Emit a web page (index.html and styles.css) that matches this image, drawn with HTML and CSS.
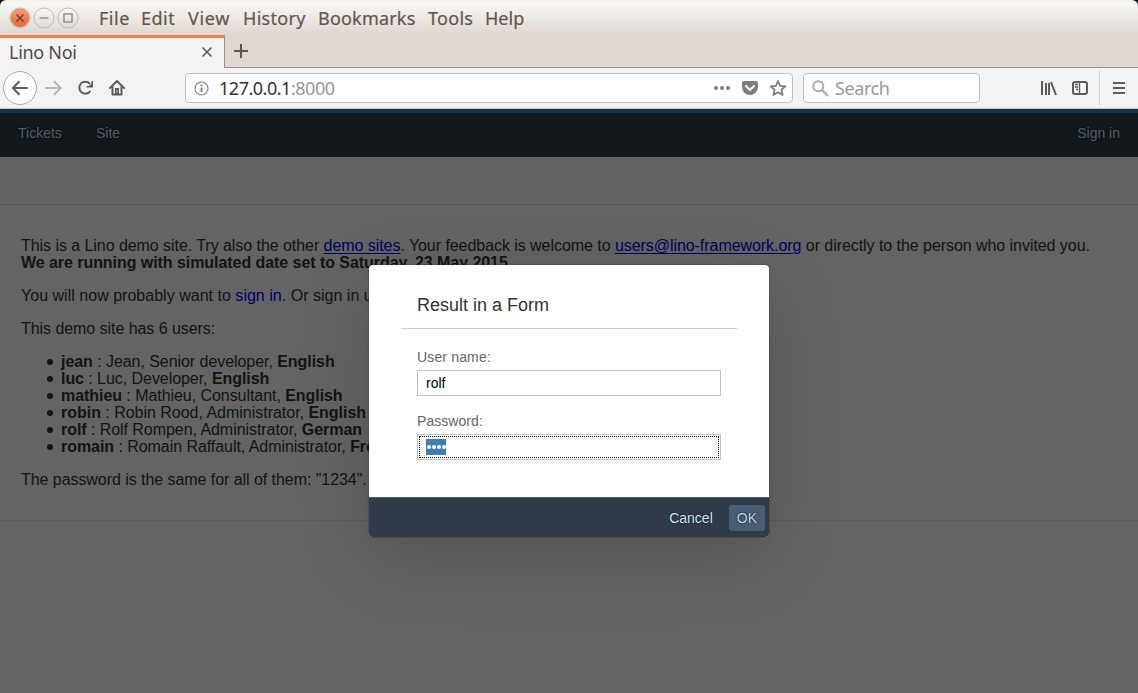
FILE: index.html
```html
<!DOCTYPE html>
<html lang="en">
<head>
<meta charset="utf-8">
<title>Lino Noi</title>
<link rel="stylesheet" href="styles.css">
</head>
<body>
<div class="window">
  <header class="titlebar">
    <svg class="controls" width="72" height="24" viewBox="0 0 72 24">
      <defs>
        <linearGradient id="orange" x1="0" y1="0" x2="0" y2="1"><stop offset="0" stop-color="#f79b78"/><stop offset="1" stop-color="#e9652f"/></linearGradient>
        <linearGradient id="grey" x1="0" y1="0" x2="0" y2="1"><stop offset="0" stop-color="#faf9f8"/><stop offset="1" stop-color="#dedad6"/></linearGradient>
      </defs>
      <g stroke="#c1b9b2">
        <circle cx="12" cy="12" r="10.2" fill="#dfd5cd" stroke="#d3cac3"/>
        <circle cx="12" cy="12" r="9" fill="url(#orange)" stroke="#df8a68"/>
        <circle cx="36" cy="12" r="10" fill="url(#grey)"/>
        <circle cx="60" cy="12" r="10" fill="url(#grey)"/>
      </g>
      <g fill="none" stroke="#6d4435" stroke-width="1.5"><path d="M8.5 8.5l7 7M15.5 8.5l-7 7"/></g>
      <g fill="none" stroke="#999189" stroke-width="1.5"><path d="M31.500 12h9"/><path d="M56 8h8v8h-8z"/></g>
    </svg>
    <nav class="menus"><span class="m-file">File</span><span class="m-edit">Edit</span><span class="m-view">View</span><span class="m-history">History</span><span class="m-book">Bookmarks</span><span class="m-tools">Tools</span><span>Help</span></nav>
  </header>
  <div class="tabs">
    <div class="tab"><span class="tab-title">Lino Noi</span>
      <svg width="12" height="12" viewBox="0 0 12 12" fill="none" stroke="#5b5b5a" stroke-width="1.6"><path d="M1.500 1.500l9 9M10.500 1.500l-9 9"/></svg>
    </div>
    <div class="tab-rest"><svg width="14" height="14" viewBox="0 0 14 14" stroke="#5a5653" stroke-width="2"><path d="M7 0v14M0 7h14"/></svg></div>
  </div>
  <div class="toolbar">
    <svg class="navicons" width="130" height="36" viewBox="0 0 130 36" fill="none" stroke="#5c5c5b" stroke-width="2" stroke-linecap="round" stroke-linejoin="round">
      <circle cx="17" cy="18" r="16.5" fill="#fdfdfd" stroke="#a9a7a5" stroke-width="1"/>
      <path d="M10 18h14M16 11.7L9.8 18l6.2 6.3"/>
      <path stroke="#b6b5b4" d="M43 18h14M51.5 11.7l6.2 6.3-6.2 6.3"/>
      <path stroke-linecap="butt" d="M87 13.9A6 6 0 1 0 87.300 21"/>
      <path fill="#5c5c5b" stroke="none" d="M90 11v6.500h-6.500v-1.500h2.500l2.500-2.500V11z"/>
      <path d="M107 18l7-7 7 7M109.500 17v7.500h9V17"/>
      <path fill="#5c5c5b" stroke="none" d="M112 18h4v6h-4z"/><path stroke="#f4f3f2" stroke-width="1" d="M114 21v1"/>
    </svg>
    <div class="field url">
      <svg width="15" height="15" viewBox="0 0 15 15" fill="none" stroke="#7b7b7b"><circle cx="7.5" cy="7.5" r="6.5" stroke-width="1.1"/><path stroke-width="1.8" d="M7.5 6.5v4.5M7.5 3.6v1.7"/></svg>
      <span class="address"><b>127.0.0.1</b>:8000</span>
      <svg width="74" height="18" viewBox="0 0 74 18" fill="#7e7e7e">
        <circle cx="3" cy="9" r="2"/><circle cx="9" cy="9" r="2"/><circle cx="15" cy="9" r="2"/>
        <path d="M31 2h12q2 0 2 2v4a8 8 0 0 1-16 0V4q0-2 2-2z"/>
        <path fill="none" stroke="#fff" stroke-width="2" stroke-linecap="round" stroke-linejoin="round" d="M33 7l4 4 4-4"/>
        <path fill="none" stroke="#7e7e7e" stroke-width="1.8" stroke-linejoin="round" d="M65 2l2.1 4.800 5.300.5-4 3.500 1.200 5.200-4.600-2.800-4.600 2.800 1.200-5.200-4-3.500 5.300-.5z"/>
      </svg>
    </div>
    <div class="field search">
      <svg width="17" height="17" viewBox="0 0 17 17" fill="none" stroke="#aaa" stroke-width="2"><circle cx="6.3" cy="6.3" r="5"/><path d="M10 10l6 6"/></svg>
      <span>Search</span>
    </div>
    <svg class="right-icons" width="98" height="34" viewBox="0 0 98 34" fill="none" stroke="#5c5c5b" stroke-width="2">
      <path d="M2 10v14M6 12v12M9 12v12"/><path d="M11 11l5 13"/>
      <rect x="33" y="11" width="14" height="12" rx="2"/>
      <path stroke-width="1.3" d="M39.5 11v12M35 13.5h3M35 16h3M36 18.5h2"/>
      <path stroke="#d5d3d1" stroke-width="1" d="M59.500 0v34"/>
      <path d="M73 12h12M73 17h12M73 22h12"/>
    </svg>
  </div>
  <main class="page">
    <nav class="sitebar"><span class="tickets">Tickets</span><span>Site</span><span class="signin">Sign in</span></nav>
    <div class="subbar"></div>
    <section class="content">
      <p>This is a Lino demo site. Try also the other <a class="under">demo sites</a>. Your feedback is welcome to <a class="under">users@lino-framework.org</a> or directly to the person who invited you.<br><b>We are running with simulated date set to Saturday, 23 May 2015.</b></p>
      <p class="wide">You will now probably want to <a>sign in</a>. Or sign in u</p>
      <p>This demo site has 6 users:</p>
      <ul>
        <li><b>jean</b> : Jean, Senior developer, <b>English</b></li>
        <li><b>luc</b> : Luc, Developer, <b>English</b></li>
        <li><b>mathieu</b> : Mathieu, Consultant, <b>English</b></li>
        <li class="robin"><b>robin</b> : Robin Rood, Administrator, <b>English</b></li>
        <li><b>rolf</b> : Rolf Rompen, Administrator, <b>German</b></li>
        <li><b>romain</b> : Romain Raffault, Administrator, <b>Fre</b></li>
      </ul>
      <p>The password is the same for all of them: "1234".</p>
    </section>
    <div class="overlay">
      <div class="dialog">
        <div class="form">
          <h1>Result in a Form</h1>
          <label class="first">User name:</label>
          <div class="input">rolf</div>
          <label class="second">Password:</label>
          <div class="input focused"><span class="selected"><i></i><i></i><i></i><i></i></span></div>
        </div>
        <footer><span class="cancel">Cancel</span><span class="ok">OK</span></footer>
      </div>
    </div>
  </main>
</div>
</body>
</html>
```
FILE: styles.css
```css
* { box-sizing: border-box; }
body { margin: 0; background: #10161b; font-family: "Liberation Sans", Arial, sans-serif; }
svg { display: block; flex: none; }
.window { width: 1138px; height: 693px; display: flex; flex-direction: column; overflow: hidden; border-radius: 6px 6px 0 0; }
.titlebar { flex: none; height: 35px; display: flex; align-items: center; padding-left: 8px; background: linear-gradient(#f0ede9 0, #f8f7f5 3px, #dfd7d0 35px); font-family: "Noto Sans", sans-serif; color: #5f574f; }
.menus { display: grid; grid-template-columns: 42px 47px 55px 75px 110px 57px 60px; margin-left: 19px; font-size: 18px; line-height: 24px; -webkit-text-stroke: .2px #5f574f; white-space: nowrap; }
.m-file, .m-edit { letter-spacing: .5px; }
.m-view { letter-spacing: .7px; }
.m-history { letter-spacing: .3px; }
.m-book { letter-spacing: .2px; }
.m-tools { letter-spacing: .3px; }
.tabs { flex: none; height: 33px; display: flex; font-family: "Noto Sans", sans-serif; }
.tab { width: 225px; display: flex; align-items: center; justify-content: space-between; padding: 0 11px 2px 9px; border-top: 3px solid #f08157; border-right: 1px solid #999089; background: #f4f3f2; color: #4c4c4c; font-size: 18px; }
.tab-title { letter-spacing: -.3px; }
.tab-rest { flex: 1; padding: 9px; background: #dfd7d1; border-bottom: 1px solid #999089; }
.toolbar { flex: none; height: 41px; display: flex; align-items: center; background: #f4f3f2; border-bottom: 1px solid #c9c7c4; padding-left: 3px; font-family: "Noto Sans", sans-serif; font-size: 18px; }
.field { height: 30px; display: flex; align-items: center; background: #fff; border: 1px solid #c3c1be; border-radius: 4px; color: #999; }
.url { width: 608px; margin-left: 52px; padding: 0 5px 0 8px; }
.address { flex: 1; margin-left: 10px; letter-spacing: -.48px; }
.address b { font-weight: 400; color: #333; }
.search { width: 177px; margin-left: 10px; padding-left: 8px; gap: 6px; letter-spacing: -.4px; }
.right-icons { margin-left: 60px; }
.page { flex: 1; position: relative; background: #fafafa; font-size: 16px; line-height: 17px; color: #333; }
.sitebar { height: 48px; display: flex; padding: 12px 18px 0; background: #2f3c48; border-top: 4px solid #427cac; color: #d1e8ff; font-size: 14px; line-height: 16px; text-shadow: 0 0 2px #000; }
.tickets { width: 78px; }
.signin { margin-left: auto; }
.subbar { height: 48px; background: #eff4f9; border-bottom: 1px solid #cfd8e2; }
.content { padding: 32px 21px; height: 316px; border-bottom: 1px solid #e5e5e5; white-space: nowrap; letter-spacing: -.055px; }
.content p { margin: 0 0 16px; }
.content .wide { letter-spacing: .02px; }
.content ul { margin: 0 0 16px; padding-left: 40px; list-style: none; }
.content li::before { content: ""; display: inline-block; width: 6px; height: 6px; margin: 0 8px 2px -14px; border-radius: 50%; background: #333; }
.robin { letter-spacing: -.02px; }
.content a { color: #00e; }
.under { text-decoration: underline; text-underline-offset: 2px; }
.overlay { position: absolute; inset: 0; display: flex; justify-content: center; align-items: flex-start; padding-top: 156px; background: rgba(0,0,0,.6); overflow: hidden; }
.dialog { width: 400px; height: 272px; display: flex; flex-direction: column; border-radius: 4px; overflow: hidden; background: #fff; box-shadow: 0 0 2px rgba(0,0,0,.5), 0 20px 80px rgba(0,0,0,.16); font-size: 14px; }
.form { flex: 1; padding: 16px 32px 0; }
h1 { margin: 0 0 20px; height: 48px; padding-left: 16px; border-bottom: 1px solid #ccc; font-size: 18px; font-weight: 400; line-height: 48px; color: #333; }
label { display: block; margin: 0 16px 4px; height: 17px; line-height: 17px; color: #666; }
.first { letter-spacing: .15px; }
.second { margin-top: 17px; letter-spacing: .05px; }
.input { margin: 0 16px; height: 26px; border: 1px solid #bfbfbf; padding: 4px 8px; line-height: 16px; color: #000; }
.focused { outline: 1px dotted #000; outline-offset: -3px; }
.selected { display: flex; height: 16px; width: 20px; justify-content: space-around; align-items: center; background: #427cac; }
.selected i { width: 4px; height: 4px; border-radius: 2px; background: #fff; }
footer { height: 40px; display: flex; justify-content: flex-end; align-items: center; gap: 8px; padding: 0 4px; background: #2f3c48; border-top: 1px solid #475e75; color: #d1e8ff; text-shadow: 0 0 2px #000; }
.cancel, .ok { height: 26px; padding: 0 8px; line-height: 26px; border-radius: 3px; }
.ok { background: #475e75; color: #c5d9ed; }
```
